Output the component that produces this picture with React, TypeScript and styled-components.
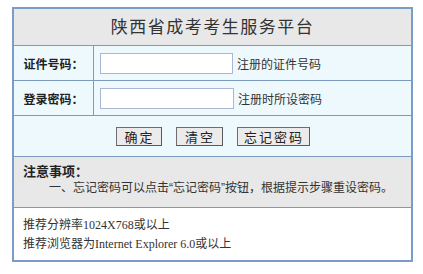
import * as React from 'react';
import styled, { createGlobalStyle } from 'styled-components';

const GlobalStyle = createGlobalStyle`
  body {
    margin: 0;
    background: #ffffff;
    font-family: "Noto Sans CJK SC", "DejaVu Sans", sans-serif;
    color: #333333;
  }
`;

const Page = styled.div`
  padding: 7px 0 0 12px;
`;

const Panel = styled.div`
  width: 397px;
  border: 2px solid #7b9bc8;
  background: #eef9fd;
`;

const Title = styled.div`
  height: 36px;
  line-height: 34px;
  text-align: center;
  background: #e8e8e8;
  border-bottom: 1px solid #7d9bbe;
  font-size: 17px;
  letter-spacing: 1.5px;
  color: #333333;
`;

const Row = styled.div`
  display: flex;
  height: 34px;
  border-bottom: 1px solid #7d9bbe;
`;

const Label = styled.div`
  width: 79px;
  border-right: 1px solid #7d9bbe;
  display: flex;
  align-items: center;
  justify-content: center;
  font-size: 12px;
  font-weight: bold;
  color: #222222;
`;

const Field = styled.div`
  flex: 1;
  display: flex;
  align-items: center;
  padding-left: 6px;
  gap: 4px;
`;

const Input = styled.input<{ $w: number }>`
  box-sizing: border-box;
  width: ${({ $w }) => $w}px;
  height: 21px;
  border: 1px solid #a9b6d6;
  background: #ffffff;
  margin: 0;
  padding: 0 3px;
  outline: none;
`;

const Hint = styled.span`
  font-size: 12px;
  color: #333333;
`;

const ButtonRow = styled.div`
  height: 40px;
  display: flex;
  align-items: center;
  justify-content: center;
  gap: 14px;
  border-bottom: 1px solid #7d9bbe;
`;

const Button = styled.button<{ $w: number }>`
  box-sizing: border-box;
  width: ${({ $w }) => $w}px;
  height: 19px;
  margin: 0;
  padding: 0;
  background: #ebebeb;
  border: 1px solid #6e6e6e;
  border-right-color: #5a5a5a;
  border-bottom-color: #5a5a5a;
  font-family: "Noto Sans CJK SC", sans-serif;
  font-size: 13px;
  line-height: 17px;
  letter-spacing: 2px;
  text-indent: 2px;
  color: #222222;
`;

const Notice = styled.div`
  background: #e8e8e8;
  height: 51px;
  padding: 6px 0 0 9px;
  box-sizing: border-box;
  border-bottom: 1px solid #7d9bbe;
  font-family: "Liberation Sans", "Noto Sans CJK SC", sans-serif;
  font-size: 12px;
  line-height: 17px;
`;

const NoticeHead = styled.div`
  font-weight: bold;
  font-size: 13px;
  color: #222222;
`;

const NoticeItem = styled.div`
  padding-left: 26px;
  color: #333333;
`;

const Footer = styled.div`
  background: #ffffff;
  height: 52px;
  box-sizing: border-box;
  padding: 8px 0 0 9px;
  font-family: "Liberation Serif", "Noto Sans CJK SC", serif;
  font-size: 12px;
  line-height: 19px;
  color: #333333;
`;

export default function App() {
  return (
    <Page>
      <GlobalStyle />
      <Panel>
        <Title>陕西省成考考生服务平台</Title>
        <Row>
          <Label>证件号码：</Label>
          <Field>
            <Input $w={133} type="text" />
            <Hint>注册的证件号码</Hint>
          </Field>
        </Row>
        <Row>
          <Label>登录密码：</Label>
          <Field>
            <Input $w={134} type="password" />
            <Hint>注册时所设密码</Hint>
          </Field>
        </Row>
        <ButtonRow>
          <Button $w={46}>确定</Button>
          <Button $w={47}>清空</Button>
          <Button $w={73}>忘记密码</Button>
        </ButtonRow>
        <Notice>
          <NoticeHead>注意事项：</NoticeHead>
          <NoticeItem>一、忘记密码可以点击“忘记密码”按钮，根据提示步骤重设密码。</NoticeItem>
        </Notice>
        <Footer>
          <div>推荐分辨率1024X768或以上</div>
          <div>推荐浏览器为Internet Explorer 6.0或以上</div>
        </Footer>
      </Panel>
    </Page>
  );
}
